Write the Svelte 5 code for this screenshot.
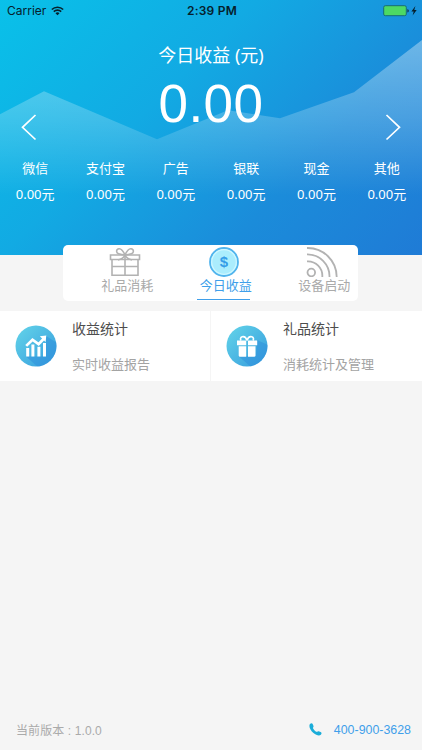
<script lang="ts">
  interface Channel {
    name: string;
    amount: string;
  }

  const channels: Channel[] = [
    { name: '微信', amount: '0.00' },
    { name: '支付宝', amount: '0.00' },
    { name: '广告', amount: '0.00' },
    { name: '银联', amount: '0.00' },
    { name: '现金', amount: '0.00' },
    { name: '其他', amount: '0.00' }
  ];

  const tabs = [
    { id: 'gift', label: '礼品消耗' },
    { id: 'income', label: '今日收益' },
    { id: 'device', label: '设备启动' }
  ];

  const entries = [
    { id: 'chart', title: '收益统计', desc: '实时收益报告' },
    { id: 'present', title: '礼品统计', desc: '消耗统计及管理' }
  ];

  let activeTab = $state('income');
</script>

<div class="page">
  <header class="hero">
    <svg class="mountains" viewBox="0 0 422 254" preserveAspectRatio="none">
      <defs>
        <linearGradient id="fade" gradientUnits="userSpaceOnUse" x1="0" y1="40" x2="0" y2="195">
          <stop offset="0" stop-color="#fff" stop-opacity="0.36" />
          <stop offset="0.5" stop-color="#fff" stop-opacity="0.2" />
          <stop offset="1" stop-color="#fff" stop-opacity="0" />
        </linearGradient>
      </defs>
      <path d="M0 114 44 91 157 139 228 110 280 118 354 92 422 40V254H0Z" fill="url(#fade)" />
    </svg>

    <div class="status-bar">
      <div class="carrier">
        <span>Carrier</span>
        <svg width="13" height="10" viewBox="0 0 13 10" fill="none" stroke="#06202c" stroke-width="1.6">
          <path d="M.8 3.5a8.2 8.2 0 0 1 11.4 0" />
          <path d="M2.8 5.6a5.3 5.3 0 0 1 7.4 0" />
          <path d="M6.5 9.3 4.5 7.3a2.8 2.8 0 0 1 4 0Z" fill="#06202c" stroke="none" />
        </svg>
      </div>
      <span class="time">2:39 PM</span>
      <svg class="battery" width="34" height="12" viewBox="0 0 34 12">
        <rect x=".7" y=".7" width="22.6" height="10" rx="1.6" fill="#4cd964" stroke="#176c75" stroke-width="1" />
        <path d="M24.4 4v3.6q1.4-.4 1.4-1.8T24.4 4Z" fill="#11334c" />
        <path d="M32.4 1 28.4 6.4h2.3L29.6 10.4 33.7 4.9h-2.4Z" fill="#06202c" />
      </svg>
    </div>

    <div class="hero-title">今日收益 (元)</div>

    <div class="total-row">
      <button type="button" class="arrow" aria-label="prev">
        <svg width="16" height="28" viewBox="0 0 16 28"><path d="M14.5 2 1.5 14.3 14.5 26.5" /></svg>
      </button>
      <div class="total">0.00</div>
      <button type="button" class="arrow" aria-label="next">
        <svg width="16" height="28" viewBox="0 0 16 28"><path d="M1.5 2 14.5 14.3 1.5 26.5" /></svg>
      </button>
    </div>

    <div class="channels">
      {#each channels as channel}
        <div class="channel">
          <span>{channel.name}</span>
          <span>{channel.amount}元</span>
        </div>
      {/each}
    </div>
  </header>

  <nav class="tabs">
    {#each tabs as tab (tab.id)}
      <button
        type="button"
        class="tab"
        class:active={activeTab === tab.id}
        onclick={() => activeTab = tab.id}
      >
        {#if tab.id === 'gift'}
          <svg width="32" height="30" viewBox="0 0 32 30" fill="none" stroke="#b2b2b2" stroke-width="1.6">
            <path d="M1.5 8h29v4.5h-29ZM3 12.5h26v15.7H3ZM3 19.5h26M16 8v20.2" />
            <path d="M16 8C14 3.500 12 1.500 10 1.700 7 2 6.800 5.800 9.500 6.800c1.700.6 4 .6 6.500 1.200 2.500-.6 4.800-.6 6.500-1.200 2.700-1 2.500-4.800-.5-5.100-2-.2-4 1.800-6 6.300Z" />
            <path d="M16 8q-1.500 3.700-7 5M16 8q1.500 3.700 7 5" />
          </svg>
        {:else if tab.id === 'income'}
          <svg width="32" height="30" viewBox="0 0 32 30">
            <circle cx="16" cy="15" r="14" fill="#abedfd" stroke="#51b4ed" stroke-width="1.8" />
            <circle cx="16" cy="15" r="12.3" fill="none" stroke="#d0f7ff" stroke-width="1.2" />
            <text x="16" y="20" text-anchor="middle" class="dollar">$</text>
          </svg>
        {:else}
          <svg width="32" height="30" viewBox="0 0 32 30" fill="none" stroke="#b2b2b2" stroke-width="1.8">
            <circle cx="5.3" cy="25.5" r="3.8" />
            <path d="M1 14.400A14.500 14.500 0 0 1 16.300 30M1 7.400A22 22 0 0 1 23.500 30M1 1A29 29 0 0 1 30.700 30" />
          </svg>
        {/if}
        <span class="tab-label">{tab.label}</span>
      </button>
    {/each}
  </nav>

  <section class="entries">
    {#each entries as entry (entry.id)}
      <div class="entry">
        <svg class="entry-icon" width="42" height="42" viewBox="0 0 42 42">
          <defs>
            <linearGradient id="disc-{entry.id}" x1="0" y1="0" x2="1" y2="1">
              <stop offset="0.1" stop-color="#5fcfe8" />
              <stop offset="1" stop-color="#359bdd" />
            </linearGradient>
            <clipPath id="clip-{entry.id}"><circle cx="21" cy="21" r="20.5" /></clipPath>
          </defs>
          <circle cx="21" cy="21" r="20.5" fill="url(#disc-{entry.id})" />
          <g clip-path="url(#clip-{entry.id})">
            {#if entry.id === 'chart'}
              <path d="M31 11 42 18V42H23L11 31.5H31Z" fill="#2e8edb" opacity=".5" />
              <path d="M12.7 23v8.5M17.9 19.5v12M23.9 21.8v9.7M29.5 18v13.5" stroke="#fff" stroke-width="3" />
              <path d="m11.2 20.9 6.3-6.2 6.1 4.5 5.6-5.9" fill="none" stroke="#fff" stroke-width="2.7" />
              <path d="m24.8 11.2 6.5-.8-.7 6.5Z" fill="#fff" />
            {:else}
              <path d="M31 15 42 20V42H25L13 31.5 30 31Z" fill="#2e8edb" opacity=".5" />
              <path d="M11 15.500h9.200v4.700H11ZM22 15.500h9.200v4.700H22ZM12.700 21.300h7.500v10.400h-6.200q-1.300 0-1.300-1.300ZM22 21.300h7.500v9.100q0 1.300-1.300 1.300H22Z" fill="#fff" />
              <path d="M21 15.500c-1-3-3-4.200-4.800-3.700-2 .6-2 2.500-1.200 3.700M21 15.500c1-3 3-4.200 4.800-3.700 2 .6 2 2.500 1.200 3.700" fill="none" stroke="#fff" stroke-width="1.600" />
            {/if}
          </g>
        </svg>
        <div class="entry-text">
          <span class="entry-title">{entry.title}</span>
          <span class="entry-desc">{entry.desc}</span>
        </div>
      </div>
    {/each}
  </section>

  <footer class="footer">
    <span class="version">当前版本 : 1.0.0</span>
    <a class="phone" href="tel:400-900-3628">
      <svg width="13" height="13" viewBox="0 0 13 13">
        <path d="M1 1.100C2.200-.2 3.400.3 3.900 1.500l.6 1.600c.3.800-.8 1.300-.5 2.100.7 1.600 1.900 2.800 3.500 3.600.8.400 1.400-.8 2.200-.5l1.900.8c1.200.5 1.200 1.600.2 2.700-1.300 1.400-4.500.8-7.300-1.700C1.200 7.300-.6 3 1 1.100Z" fill="#1badd9" />
      </svg>
      <span>400-900-3628</span>
    </a>
  </footer>
</div>

<style>
:global(body) {
  background: #f5f5f5;
}

.page {
  display: flex;
  flex-direction: column;
  width: 422px;
  height: 750px;
  overflow: hidden;
  background: #f5f5f5;
  font-family: "Noto Sans", "Noto Sans CJK SC", sans-serif;
}

button {
  padding: 0;
  border: none;
  background: none;
  font: inherit;
  cursor: pointer;
}

svg {
  display: block;
}

.hero {
  position: relative;
  flex: none;
  height: 254.5px;
  background: linear-gradient(135deg, #09c1e9 0%, #12aae3 38%, #1b8cda 70%, #1f7bd6 100%);
  color: #fff;
}

.mountains {
  position: absolute;
  inset: 0;
  width: 100%;
  height: 100%;
}

.status-bar {
  position: relative;
  display: grid;
  grid-template-columns: 1fr auto 1fr;
  align-items: center;
  height: 21px;
  padding: 0 5px 0 7px;
  color: #06202c;
  font-family: Inter, sans-serif;
  font-size: 12px;
}

.carrier {
  display: flex;
  align-items: center;
  gap: 5px;
}

.time {
  font-weight: 600;
  letter-spacing: 0.2px;
}

.battery {
  justify-self: end;
}

.hero-title {
  position: relative;
  margin-top: 22px;
  font-size: 18px;
  line-height: 24px;
  text-align: center;
}

.total-row {
  position: relative;
  display: flex;
  align-items: center;
  justify-content: space-between;
  height: 71px;
  padding: 0 20.5px;
}

.total {
  padding-top: 2px;
  font-family: "Liberation Sans", sans-serif;
  font-size: 53px;
  line-height: 70px;
  letter-spacing: 0.4px;
}

.arrow {
  align-self: flex-end;
  margin-bottom: -3px;
}

.arrow path {
  fill: none;
  stroke: #fff;
  stroke-width: 1.7;
}

.channels {
  position: relative;
  display: grid;
  grid-template-columns: repeat(6, 1fr);
  margin-top: 17px;
}

.channel {
  display: flex;
  flex-direction: column;
  align-items: center;
  font-size: 13px;
  line-height: 26px;
}

.tabs {
  position: relative;
  display: grid;
  grid-template-columns: repeat(3, 98.5px);
  justify-content: center;
  flex: none;
  width: 295px;
  height: 56px;
  margin: -9.5px auto 0 63.3px;
  border-radius: 5px;
  background: #fff;
}

.tab {
  display: flex;
  flex-direction: column;
  align-items: center;
  padding-top: 2px;
  color: #aaa;
}

.tab svg {
  margin-left: 26px;
}

.tab-label {
  margin: -1px 0 0 30px;
  font-size: 13px;
  line-height: 18px;
  white-space: nowrap;
}

.tab.active {
  color: #3f9fea;
}

.tab.active::after {
  content: "";
  width: 53px;
  height: 1px;
  margin: 5px 0 0 25px;
  background: #3f9fea;
}

.dollar {
  fill: #369de8;
  font-family: "Liberation Sans", sans-serif;
  font-size: 15px;
  font-weight: 700;
}

.entries {
  display: grid;
  grid-template-columns: 210px 1fr;
  gap: 1px;
  flex: none;
  height: 70px;
  margin-top: 10.3px;
}

.entry {
  display: flex;
  padding-left: 15px;
  background: #fff;
}

.entry-icon {
  margin-top: 14px;
}

.entry-text {
  display: flex;
  flex-direction: column;
  margin: 7.7px 0 0 15px;
  gap: 16px;
}

.entry-title {
  color: #4d4d4d;
  font-size: 14px;
  line-height: 20px;
}

.entry-desc {
  color: #a3a3a3;
  font-size: 13px;
  line-height: 18px;
}

.footer {
  display: flex;
  align-items: center;
  justify-content: space-between;
  height: 20px;
  margin: auto 11px 10.5px 16px;
  font-family: "Liberation Sans", "Noto Sans CJK SC", sans-serif;
  font-size: 12px;
}

.version {
  color: #aaa;
  letter-spacing: 0.1px;
}

.phone {
  display: flex;
  align-items: center;
  gap: 12px;
  color: #3f9fea;
  font-size: 12.4px;
  text-decoration: none;
}
</style>
